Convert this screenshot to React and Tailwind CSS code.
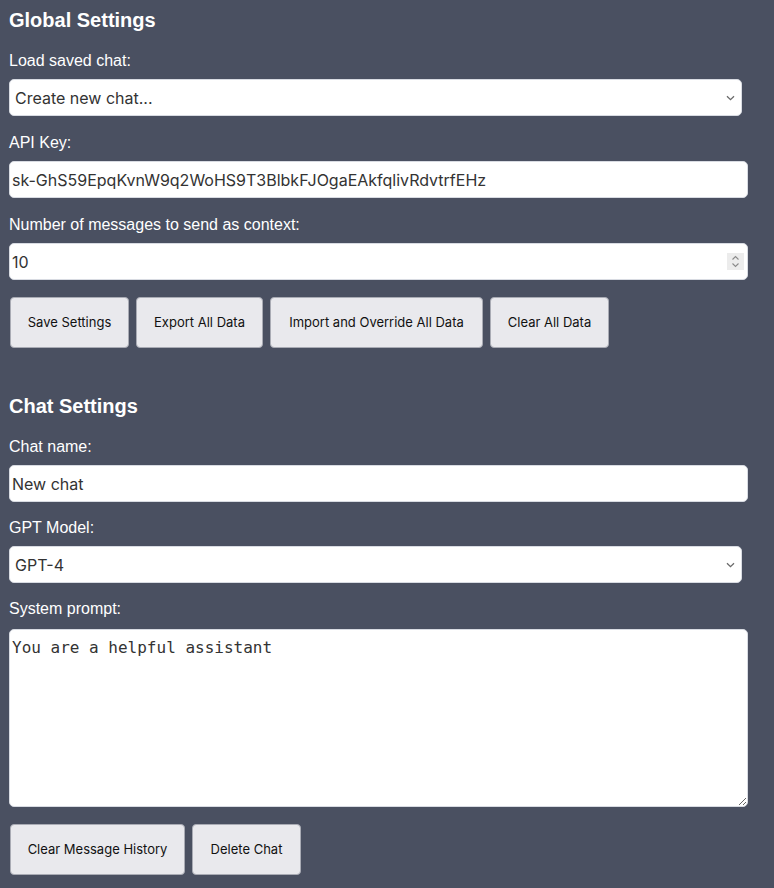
import React from "react";

const label = "block h-[18px] text-[16px] leading-[18px] text-white font-['Liberation_Sans',Arial,sans-serif]";
const field = "h-[37px] rounded-[5px] bg-white border border-[#d8dbe2] text-[16px] text-[#333] font-['Inter',sans-serif]";
const btn = "h-[51px] rounded-[4px] bg-[#e9e9ed] border border-[#a9abb4] text-[13px] text-[#111] font-['Inter',sans-serif] px-[16px]";

function Chevron() {
  return (
    <svg width="9" height="6" viewBox="0 0 9 6" className="shrink-0">
      <path d="M1 1.2l3.5 3.5 3.5-3.5" fill="none" stroke="#6a6a6a" strokeWidth="1.3" />
    </svg>
  );
}

function SelectBox({ text }) {
  return (
    <div className={`${field} w-[733px] flex items-center justify-between pl-[5px] pr-[6px]`}>
      <span>{text}</span>
      <Chevron />
    </div>
  );
}

export default function App() {
  return (
    <div className="min-h-[888px] bg-[#4a5061] pl-[9px] pt-[8px] pb-[13px] font-['Liberation_Sans',Arial,sans-serif]">
      <h2 className="text-[20px] leading-[24px] font-bold text-white">Global Settings</h2>
      <div className="mt-[20px]">
        <span className={label}>Load saved chat:</span>
        <div className="mt-[9px]"><SelectBox text="Create new chat..." /></div>
      </div>
      <div className="mt-[18px]">
        <span className={label}>API Key:</span>
        <div className={`${field} mt-[9px] w-[739px] flex items-center px-[2px]`}>
          <span>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</span>
        </div>
      </div>
      <div className="mt-[18px]">
        <span className={label}>Number of messages to send as context:</span>
        <div className={`${field} mt-[9px] w-[739px] flex items-center justify-between pl-[2px] pr-[3px]`}>
          <span>10</span>
          <div className="w-[17px] h-[17px] bg-[#ececec] flex items-center justify-center">
            <svg width="9" height="13" viewBox="0 0 9 13">
              <path d="M1.5 4.5l3-3 3 3M1.5 8.5l3 3 3-3" fill="none" stroke="#8a8a8a" strokeWidth="1.1" />
            </svg>
          </div>
        </div>
      </div>
      <div className="mt-[17px] flex gap-[7px] pl-[1px]">
        <button className={`${btn} w-[119px]`}>Save Settings</button>
        <button className={`${btn} w-[127px]`}>Export All Data</button>
        <button className={`${btn} w-[213px]`}>Import and Override All Data</button>
        <button className={`${btn} w-[119px]`}>Clear All Data</button>
      </div>

      <h2 className="mt-[46px] text-[20px] leading-[24px] font-bold text-white">Chat Settings</h2>
      <div className="mt-[20px]">
        <span className={label}>Chat name:</span>
        <div className={`${field} mt-[9px] w-[739px] flex items-center px-[2px]`}>
          <span>New chat</span>
        </div>
      </div>
      <div className="mt-[17px]">
        <span className={label}>GPT Model:</span>
        <div className="mt-[9px]"><SelectBox text="GPT-4" /></div>
      </div>
      <div className="mt-[17px]">
        <span className={label}>System prompt:</span>
        <textarea
          defaultValue="You are a helpful assistant"
          className="block mt-[11px] w-[739px] h-[178px] rounded-[5px] bg-white border border-[#d8dbe2] px-[2px] pt-[8px] pb-[6px] text-[16px] leading-[20px] text-[#333] font-['DejaVu_Sans_Mono',monospace] outline-none"
        />
      </div>
      <div className="mt-[17px] flex gap-[7px] pl-[1px]">
        <button className={`${btn} w-[175px]`}>Clear Message History</button>
        <button className={`${btn} w-[109px]`}>Delete Chat</button>
      </div>
    </div>
  );
}
